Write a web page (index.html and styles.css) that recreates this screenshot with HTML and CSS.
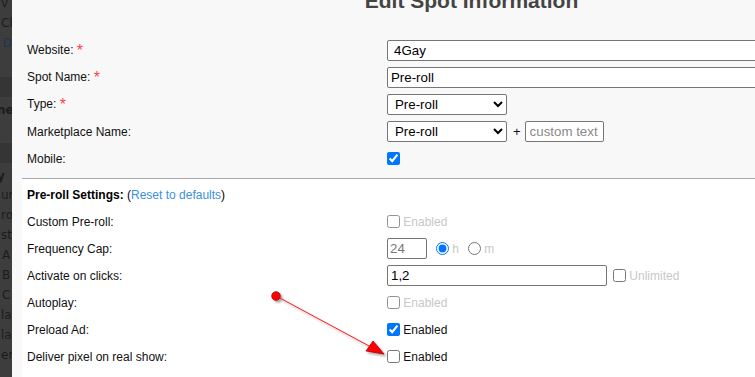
FILE: index.html
```html
<!DOCTYPE html>
<html lang="en">
<head>
    <meta charset="UTF-8">
    <meta name="viewport" content="width=device-width, initial-scale=1.0">
    <title>Edit Spot Information</title>
    <link rel="stylesheet" href="styles.css">
</head>
<body>
    <div class="page">
        <!-- what is left visible of the page behind the modal -->
        <div class="backdrop">
            <div class="bd-item bd-first">v</div>
            <div class="bd-item">Ch</div>
            <div class="bd-item bd-link">u D</div>
            <div class="bd-gap"></div>
            <div class="bd-band"></div>
            <div class="bd-item bd-bold bd-tall">ne</div>
            <div class="bd-gap2"></div>
            <div class="bd-band"></div>
            <div class="bd-item bd-bold bd-short">y</div>
            <div class="bd-item">un</div>
            <div class="bd-item">rol</div>
            <div class="bd-item">str</div>
            <div class="bd-item bd-center">A</div>
            <div class="bd-item bd-center">B</div>
            <div class="bd-item bd-center">C</div>
            <div class="bd-item">lay</div>
            <div class="bd-item">lay</div>
            <div class="bd-item">er-</div>
        </div>

        <div class="modal">
            <h2 class="modal-title">Edit Spot Information</h2>

            <div class="section section-main">
                <div class="form-row">
                    <div class="form-label">Website: <span class="required">*</span></div>
                    <div class="form-field">
                        <input type="text" class="text-input wide-input site-input" value="4Gay">
                    </div>
                </div>
                <div class="form-row">
                    <div class="form-label">Spot Name: <span class="required">*</span></div>
                    <div class="form-field">
                        <input type="text" class="text-input wide-input" value="Pre-roll">
                    </div>
                </div>
                <div class="form-row">
                    <div class="form-label">Type: <span class="required">*</span></div>
                    <div class="form-field">
                        <select class="select-input">
                            <option>Pre-roll</option>
                        </select>
                    </div>
                </div>
                <div class="form-row">
                    <div class="form-label">Marketplace Name:</div>
                    <div class="form-field">
                        <select class="select-input">
                            <option>Pre-roll</option>
                        </select>
                        <span class="plus">+</span>
                        <input type="text" class="text-input custom-input" placeholder="custom text">
                    </div>
                </div>
                <div class="form-row">
                    <div class="form-label">Mobile:</div>
                    <div class="form-field">
                        <input type="checkbox" class="check" checked>
                    </div>
                </div>
            </div>

            <div class="section section-preroll">
                <div class="form-row">
                    <div class="section-heading">
                        <b>Pre-roll Settings:</b> (<a href="#" class="reset-link">Reset to defaults</a>)
                    </div>
                </div>
                <div class="form-row">
                    <div class="form-label">Custom Pre-roll:</div>
                    <div class="form-field">
                        <label class="check-label muted"><input type="checkbox" class="check check-off"> Enabled</label>
                    </div>
                </div>
                <div class="form-row">
                    <div class="form-label">Frequency Cap:</div>
                    <div class="form-field">
                        <input type="text" class="text-input cap-input" value="24">
                        <label class="radio-label muted"><input type="radio" name="cap" class="radio" checked> h</label>
                        <label class="radio-label muted"><input type="radio" name="cap" class="radio"> m</label>
                    </div>
                </div>
                <div class="form-row">
                    <div class="form-label">Activate on clicks:</div>
                    <div class="form-field">
                        <input type="text" class="text-input clicks-input" value="1,2">
                        <label class="check-label muted unlimited"><input type="checkbox" class="check"> Unlimited</label>
                    </div>
                </div>
                <div class="form-row">
                    <div class="form-label">Autoplay:</div>
                    <div class="form-field">
                        <label class="check-label muted"><input type="checkbox" class="check check-off"> Enabled</label>
                    </div>
                </div>
                <div class="form-row">
                    <div class="form-label">Preload Ad:</div>
                    <div class="form-field">
                        <label class="check-label"><input type="checkbox" class="check" checked> Enabled</label>
                    </div>
                </div>
                <div class="form-row">
                    <div class="form-label">Deliver pixel on real show:</div>
                    <div class="form-field">
                        <label class="check-label"><input type="checkbox" class="check"> Enabled</label>
                    </div>
                </div>
            </div>
        </div>
    </div>

    <!-- red annotation arrow drawn over the screenshot -->
    <svg class="annotation" width="755" height="377" viewBox="0 0 755 377">
        <defs>
            <filter id="shade" x="-20%" y="-20%" width="140%" height="140%">
                <feDropShadow dx="2" dy="2" stdDeviation="1.2" flood-color="#000" flood-opacity="0.35"/>
            </filter>
        </defs>
        <g filter="url(#shade)">
            <line x1="278" y1="297" x2="371" y2="347" stroke="#ff1a1a" stroke-width="1"/>
            <polygon points="384,354 366,351 373,341" fill="#f00" stroke="#b00000" stroke-width="0.8"/>
            <circle cx="276" cy="296" r="4.3" fill="#f00" stroke="#b00000" stroke-width="0.8"/>
        </g>
    </svg>
</body>
</html>
```

FILE: styles.css
```css
body {
    margin: 0;
    background-color: #f8f8f8;
    font-family: "Liberation Sans", Arial, sans-serif;
    font-size: 12px;
    color: #111;
    overflow: hidden;
    width: 755px;
    height: 377px;
    position: relative;
}
.page {
    display: flex;
    height: 377px;
}
.backdrop {
    width: 12px;
    flex-shrink: 0;
    background-color: #3d3d3d;
    overflow: hidden;
    font-family: "DejaVu Sans", sans-serif;
    font-size: 12px;
    color: #1c1c1c;
}
.bd-item {
    height: 20px;
    line-height: 20px;
    white-space: nowrap;
    padding-left: 1px;
}
.bd-first {
    margin-top: -7px;
}
.bd-link {
    color: #1d3550;
    margin-left: -10px;
}
.bd-gap {
    height: 24px;
}
.bd-gap2 {
    height: 20px;
}
.bd-band {
    height: 20px;
    background-color: #353535;
}
.bd-bold {
    font-weight: bold;
    margin-left: -4px;
}
.bd-tall {
    height: 26px;
    line-height: 26px;
}
.bd-short {
    margin-top: 5px;
    height: 17px;
    line-height: 17px;
}
.bd-item.bd-center {
    padding-left: 2px;
}
.modal {
    width: 909px;
    flex-shrink: 0;
    background-color: #f8f8f8;
    padding-left: 10px;
    box-sizing: border-box;
}
.modal-title {
    margin: -11px 0 0 0;
    height: 24px;
    line-height: 24px;
    font-size: 21px;
    font-weight: bold;
    color: #444;
    text-align: center;
}
.section {
    padding: 0 5px;
}
.section-main {
    padding-top: 24px;
    padding-bottom: 6px;
}
.section-preroll {
    background-color: #fff;
    border-top: 1px solid #a8a8a8;
    padding-top: 2px;
    padding-bottom: 20px;
}
.form-row {
    display: flex;
    align-items: center;
    height: 27px;
}
.form-label {
    width: 360px;
    flex-shrink: 0;
}
.required {
    color: #f44;
    font-size: 16px;
    vertical-align: -2px;
}
.form-field {
    display: flex;
    align-items: center;
}
.text-input {
    box-sizing: border-box;
    height: 21px;
    border: 1px solid #767676;
    border-radius: 2px;
    padding: 1px 3px;
    font-family: "Liberation Sans", Arial, sans-serif;
    font-size: 13.3px;
    color: #000;
    background-color: #fff;
    margin: 0;
}
.text-input::placeholder {
    color: #8a8a8a;
}
.wide-input {
    width: 500px;
}
.site-input {
    padding-left: 6px;
}
.select-input {
    box-sizing: border-box;
    width: 120px;
    height: 21px;
    margin: 0;
    border: 1px solid #767676;
    border-radius: 2px;
    font-family: "Liberation Sans", Arial, sans-serif;
    font-size: 13.3px;
    color: #000;
    background-color: #fff;
    padding-left: 3px;
}
.plus {
    margin: 0 4px 0 6px;
    font-size: 13px;
}
.custom-input {
    width: 79px;
    padding-left: 4px;
}
.check {
    margin: 0;
    width: 13px;
    height: 13px;
}
.check-off {
    opacity: 0.8;
}
.check-label {
    display: inline-block;
}
.check-label .check {
    vertical-align: -2px;
}
.muted {
    color: #c8c8c8;
}
.section-heading {
    color: #000;
}
.reset-link {
    color: #3b8fdc;
    text-decoration: none;
}
.cap-input {
    width: 40px;
    color: #777;
    padding-left: 2px;
}
.radio-label {
    display: inline-block;
    margin-left: 9px;
}
.radio {
    margin: 0;
    width: 13px;
    height: 13px;
    vertical-align: -2px;
}
.clicks-input {
    width: 220px;
}
.unlimited {
    margin-left: 6px;
}
.annotation {
    position: absolute;
    left: 0;
    top: 0;
    pointer-events: none;
}
```
